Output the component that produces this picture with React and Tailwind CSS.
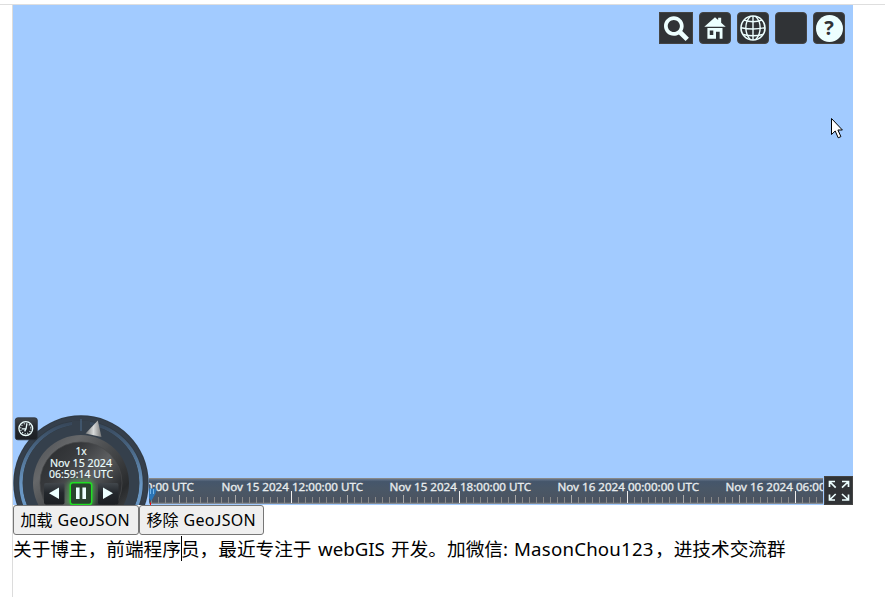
import React from "react";

const FONT = "font-['Noto_Sans','Noto_Sans_CJK_SC',sans-serif]";

const TICKS = Array.from({ length: 97 }, (_, i) => i);
const LABELS = [
  { x: 52.3, text: "Nov 15 2024 06:00:00 UTC" },
  { x: 221.5, text: "Nov 15 2024 12:00:00 UTC" },
  { x: 389.5, text: "Nov 15 2024 18:00:00 UTC" },
  { x: 557.5, text: "Nov 16 2024 00:00:00 UTC" },
  { x: 725.5, text: "Nov 16 2024 06:00:00 UTC" },
];

function ToolButton({ square, label, children }) {
  return (
    <button
      aria-label={label}
      className={`flex h-8 items-center justify-center border border-[#444] bg-[#303336] text-[#edffff] ${
        square ? "w-[34px]" : "w-8 rounded-[4px]"
      }`}
    >
      {children}
    </button>
  );
}

function Toolbar() {
  return (
    <div className="flex justify-end gap-[6px] pt-[7px] pr-2">
      <ToolButton square label="Search">
        <svg width="32" height="30" viewBox="0 0 32 32" fill="currentColor">
          <path d="M29.772,26.433l-7.126-7.126c0.96-1.583,1.523-3.435,1.524-5.421C24.169,8.093,19.478,3.401,13.688,3.399C7.897,3.401,3.204,8.093,3.204,13.885c0,5.789,4.693,10.481,10.484,10.481c1.987,0,3.839-0.563,5.422-1.523l7.128,7.127L29.772,26.433zM7.203,13.885c0.006-3.582,2.903-6.478,6.484-6.486c3.579,0.008,6.478,2.904,6.484,6.486c-0.007,3.58-2.905,6.476-6.484,6.484C10.106,20.361,7.209,17.465,7.203,13.885z" />
        </svg>
      </ToolButton>
      <ToolButton label="Home">
        <svg width="30" height="30" viewBox="0 0 28 28" fill="currentColor" className="shrink-0">
          <path d="M14,4l-10,8.75h20l-4.25-3.7188v-4.6562h-2.812v2.1875l-2.938-2.5625zm-7.0938,9.906v10.094h14.094v-10.094h-14.094zm2.1876,2.313h3.3122v4.25h-3.3122v-4.25zm5.8442,1.281h3.406v6.438h-3.406v-6.438z" />
        </svg>
      </ToolButton>
      <ToolButton label="Scene mode">
        <svg width="30" height="30" viewBox="0 0 30 30" fill="none" stroke="currentColor" strokeWidth="1.4" className="shrink-0">
          <circle cx="15" cy="15" r="12" strokeWidth="1.6" />
          <path d="M12.5 3.2C6.3 9 6.3 20.5 12.5 26.8M17.5 3.2C23.7 9 23.7 20.5 17.5 26.8" />
          <path d="M15 3V27M3 14.7Q15 17.2 27 14.7M6 7.2Q15 10.2 24 7.2M5.2 21.5Q15 24 24.8 21.5" />
        </svg>
      </ToolButton>
      <ToolButton label="Base layer" />
      <ToolButton label="Help">
        <span className="flex h-[27px] w-[27px] shrink-0 items-center justify-center rounded-full bg-[#edffff] font-['Noto_Sans',sans-serif] text-[20px] leading-none font-bold text-[#303336]">
          ?
        </span>
      </ToolButton>
    </div>
  );
}

function Dial() {
  return (
    <svg className="absolute bottom-0 left-0 text-[#edffff]" width="137" height="91" viewBox="13 414 137 91">
      <defs>
        <linearGradient id="metal" x1="0" y1="0" x2="1" y2="1">
          <stop offset="0" stopColor="#4b4d50" />
          <stop offset=".25" stopColor="#66686a" />
          <stop offset=".4" stopColor="#515355" />
          <stop offset=".75" stopColor="#282a2c" />
          <stop offset="1" stopColor="#55585a" />
        </linearGradient>
        <linearGradient id="face" x1="0" y1="0" x2="1" y2=".9">
          <stop offset="0" stopColor="#282b2d" />
          <stop offset=".3" stopColor="#37393c" />
          <stop offset=".55" stopColor="#5c5e60" />
          <stop offset=".8" stopColor="#2b2d30" />
        </linearGradient>
        <linearGradient id="ring" x1="0" y1="424" x2="0" y2="485" gradientUnits="userSpaceOnUse">
          <stop offset="0" stopColor="#38485b" />
          <stop offset=".4" stopColor="#496684" />
          <stop offset="1" stopColor="#6996c3" />
        </linearGradient>
        <linearGradient id="btn" x1="0" y1="0" x2="0" y2="1">
          <stop offset="0" stopColor="#42474c" />
          <stop offset=".45" stopColor="#24282d" />
          <stop offset="1" stopColor="#1c1f23" />
        </linearGradient>
        <linearGradient id="needle" x1="0" y1="0" x2="1" y2="0">
          <stop offset="0" stopColor="#77797a" />
          <stop offset=".5" stopColor="#d8dada" />
          <stop offset="1" stopColor="#777" />
        </linearGradient>
        <filter id="glow" x="-50%" y="-50%" width="200%" height="200%">
          <feGaussianBlur stdDeviation="2" />
        </filter>
      </defs>
      <circle cx="81" cy="483" r="67.7" fill="#303a44" />
      <circle cx="81" cy="483" r="64.5" fill="none" stroke="#353f4b" strokeWidth="4" />
      <circle cx="81" cy="483" r="60" fill="none" stroke="url(#ring)" strokeWidth="3.5" />
      <circle cx="81" cy="483" r="58.3" fill="#35404c" />
      <path d="M72 421h18v9h-18z" fill="#35404c" />
      <path d="M81 419v12" stroke="#4c6a8b" strokeWidth="1" />
      <circle cx="81" cy="483" r="48" fill="url(#metal)" />
      <circle cx="81" cy="483" r="41" fill="url(#face)" stroke="#464849" strokeWidth=".7" />
      <path d="M97.8 420.5L101.5 437L85.5 433.5Z" fill="url(#needle)" />
      <g fill="currentColor" className="font-['Noto_Sans',sans-serif] text-[10.5px]" stroke="currentColor" strokeWidth=".15">
        <text x="75.5" y="455.3" textLength="11.3" lengthAdjust="spacingAndGlyphs">1x</text>
        <text x="50" y="467" textLength="62" lengthAdjust="spacingAndGlyphs">Nov 15 2024</text>
        <text x="49" y="478" textLength="64" lengthAdjust="spacingAndGlyphs">06:59:14 UTC</text>
      </g>
      <rect x="44" y="483" width="20.5" height="21.5" rx="2" fill="url(#btn)" />
      <rect x="98" y="483" width="20.5" height="21.5" rx="2" fill="url(#btn)" />
      <rect x="70" y="483" width="22" height="21" rx="3" fill="none" stroke="#4cb84e" strokeWidth="5" opacity=".65" filter="url(#glow)" />
      <rect x="70.3" y="482.8" width="21.4" height="21.7" rx="2.5" fill="#2b4430" stroke="#20df23" strokeWidth="1.5" />
      <path d="M76 487.5h3.6v11.5h-3.6zM82.4 487.5h3.6v11.5h-3.6zM59 487.5v11.5L49 493.2zM103 487.5v11.5L113 493.2z" fill="currentColor" />
      <g>
        <rect x="15.3" y="417.8" width="22" height="22" rx="2.5" fill="url(#btn)" stroke="#293039" strokeWidth=".8" />
        <circle cx="25.8" cy="428.6" r="6.9" fill="none" stroke="currentColor" strokeWidth="1.3" />
        <path d="M26.9 423.8l-.9 5h-4.2M26 428.8l-1.4 2.6" fill="none" stroke="currentColor" strokeWidth="1.3" />
        <circle cx="25.8" cy="428.6" r="5.1" fill="none" stroke="currentColor" strokeWidth="1.3" strokeDasharray=".9 1.77" />
      </g>
    </svg>
  );
}

function Timeline() {
  return (
    <svg className="block" width="674" height="27" viewBox="149 478 674 27">
      <defs>
        <linearGradient id="bar" x1="0" y1="0" x2="0" y2="1">
          <stop offset="0" stopColor="#748298" />
          <stop offset=".14" stopColor="#45566b" />
          <stop offset=".4" stopColor="#495767" />
          <stop offset="1" stopColor="#4c535f" />
        </linearGradient>
      </defs>
      <rect x="149" y="478" width="675" height="25.5" fill="url(#bar)" />
      <path d="M149 478.5h675M149 503.2h675" stroke="#888" strokeWidth="1" />
      {TICKS.map((i) => {
        const x = 151.5 + i * 7;
        const main = (i - 20) % 24 === 0;
        const sub = (i - 4) % 8 === 0;
        return (
          <path
            key={i}
            d={`M${x} ${main ? 491 : sub ? 495 : 497}V503`}
            stroke={main ? "#eee" : sub ? "#aaa" : "#888"}
            strokeWidth="1"
          />
        );
      })}
      <g fill="#e8ecee" stroke="#e8ecee" strokeWidth=".3" className="font-['Noto_Sans',sans-serif] text-[11px]">
        {LABELS.map((l) => (
          <text key={l.x} x={l.x} y="491" textLength="141.5" lengthAdjust="spacingAndGlyphs">
            {l.text}
          </text>
        ))}
      </g>
      <path d="M149 488.5h7.5l-1 5-4.2 7.5-2.3-3z" fill="#2b76b8" />
      <path d="M150.5 489v5M153.5 489v5" stroke="#78b7e8" strokeWidth="1" />
      <path d="M150.5 502.5v2.5" stroke="#f00" strokeWidth="1" />
    </svg>
  );
}

function Fullscreen() {
  return (
    <button aria-label="Full screen" className="h-[29px] w-[29px] border border-[#444] bg-[#303336] text-[#edffff]">
      <svg width="27" height="27" viewBox="0 0 27 27" fill="none" stroke="currentColor" strokeWidth="1.7">
        <path d="M4.5 10V4.5H10M4.5 4.5l6.2 6.2M17 4.5h6.5V10M23.5 4.5l-6.5 6.2M4.5 17.5V23H10M4.5 23l6.2-6M23.5 17.5V23H17M23.5 23L17 17" />
      </svg>
    </button>
  );
}

function PushButton({ className, cjk }) {
  return (
    <button
      className={`flex h-[30px] items-center rounded-[3px] border border-[#767676] bg-[#efefef] pl-[6.5px] text-[16px] leading-none whitespace-nowrap text-black ${className}`}
    >
      <span className="w-[37px] text-left">{cjk}</span>
      <span className="tracking-[0.25px]">
        Geo<span className="font-['Lato',sans-serif]">J</span>SON
      </span>
    </button>
  );
}

export default function App() {
  return (
    <div className={`h-[597px] w-[885px] overflow-hidden bg-white pt-1 ${FONT}`}>
      <div className="h-[593px] border-t border-[#dedede] pl-3">
        <div className="h-full border-l border-[#dcdcdc]">
          <div className="relative flex h-[500px] w-[840px] flex-col justify-between bg-[#a2cbff]">
            <Toolbar />
            <div className="flex items-end pl-[136px]">
              <div className="w-[675px]">
                <Timeline />
              </div>
              <Fullscreen />
            </div>
            <Dial />
            <svg className="absolute top-[112px] left-[817px]" width="14" height="23" viewBox="0 0 14 23">
              <path d="M1.5 1.5v16l3.7-3.5 3 6.8 2.7-1.2-3-6.6h4.5z" fill="#fff" stroke="#000" strokeWidth="1" />
            </svg>
          </div>
          <div className="flex">
            <PushButton cjk="加载" className="w-[126px]" />
            <PushButton cjk="移除" className="w-[125px]" />
          </div>
          <p className="relative flex h-[28px] items-center text-[18.67px] leading-[28px] whitespace-nowrap text-black">
            <span className="w-[305px]">关于博主，前端程序员，最近专注于</span>
            <span className="w-[73px]">webGIS</span>
            <span className="w-[123px]">开发。加微信:</span>
            <span className="w-[141px] tracking-[0.2px]">MasonChou123</span>
            <span>，进技术交流群</span>
            <span className="absolute top-[1px] left-[168px] h-[25px] w-px bg-black" />
          </p>
        </div>
      </div>
    </div>
  );
}
